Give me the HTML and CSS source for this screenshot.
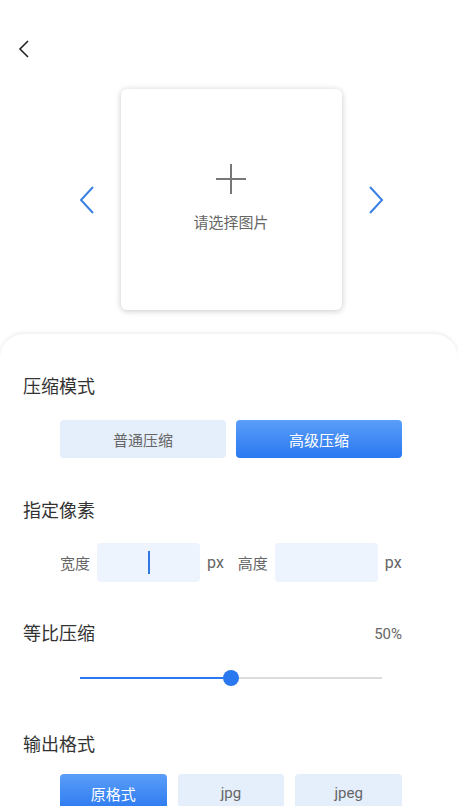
FILE: index.html
```html
<!DOCTYPE html>
<html lang="zh">
<head>
    <meta charset="UTF-8">
    <meta name="viewport" content="width=device-width, initial-scale=1.0">
    <title>图片压缩</title>
    <link rel="stylesheet" href="styles.css">
</head>
<body>

    <!-- Top bar -->
    <header class="topbar">
        <svg class="back" width="14" height="18" viewBox="0 0 14 18">
            <path d="M10 1 L2 9 L10 17" fill="none" stroke="#222" stroke-width="1.6"/>
        </svg>
    </header>

    <!-- Picture picker -->
    <section class="stage">
        <svg class="arrow" width="18" height="28" viewBox="0 0 18 28">
            <path d="M15 1 L3 14 L15 27" fill="none" stroke="#3a7fe4" stroke-width="2"/>
        </svg>
        <div class="card">
            <svg class="plus" width="32" height="32" viewBox="0 0 32 32">
                <path d="M16 1 V31 M1 16 H31" stroke="#777" stroke-width="2"/>
            </svg>
            <p class="card-text">请选择图片</p>
        </div>
        <svg class="arrow" width="18" height="28" viewBox="0 0 18 28">
            <path d="M3 1 L15 14 L3 27" fill="none" stroke="#3a7fe4" stroke-width="2"/>
        </svg>
    </section>

    <!-- Settings panel -->
    <main class="panel">
        <h2 class="title">压缩模式</h2>
        <div class="options two">
            <button class="opt">普通压缩</button>
            <button class="opt active">高级压缩</button>
        </div>

        <h2 class="title">指定像素</h2>
        <div class="size-row">
            <span class="label">宽度</span>
            <div class="input"><span class="cursor"></span></div>
            <span class="unit">px</span>
            <span class="label gap">高度</span>
            <div class="input"></div>
            <span class="unit">px</span>
        </div>

        <div class="title-row">
            <h2 class="title">等比压缩</h2>
            <span class="percent">50%</span>
        </div>
        <div class="slider">
            <div class="track"><div class="fill" style="width: 50%"></div></div>
            <div class="thumb" style="left: 50%"></div>
        </div>

        <h2 class="title">输出格式</h2>
        <div class="options three">
            <button class="opt active">原格式</button>
            <button class="opt">jpg</button>
            <button class="opt">jpeg</button>
        </div>
    </main>

</body>
</html>
```

FILE: styles.css
```css
body {
    margin: 0;
    padding: 0;
    background-color: #fff;
    font-family: Roboto, "Noto Sans CJK SC", sans-serif;
    color: #333;
    overflow: hidden;
}

.topbar {
    height: 89px;
    box-sizing: border-box;
    padding: 40px 0 0 18px;
}

.back {
    display: block;
}

.stage {
    display: flex;
    justify-content: center;
    align-items: center;
    gap: 25px;
    padding-left: 4px;
}

.arrow {
    display: block;
}

.card {
    width: 221px;
    height: 221px;
    border-radius: 6px;
    background-color: #fff;
    box-shadow: 0 1px 6px rgba(0, 0, 0, 0.22);
    display: flex;
    flex-direction: column;
    align-items: center;
    padding-top: 74px;
    box-sizing: border-box;
}

.card-text {
    margin: 17px 0 0;
    font-size: 15px;
    line-height: 22px;
    color: #666;
}

.panel {
    margin-top: 24px;
    border-radius: 24px 24px 0 0;
    box-shadow: 0 -1px 4px rgba(0, 0, 0, 0.09);
    padding: 41px 23px 0;
    min-height: 500px;
}

.title {
    margin: 0;
    font-size: 18px;
    line-height: 24px;
    font-weight: normal;
    color: #333;
}

.options {
    display: flex;
    gap: 10px;
    margin: 21px 33px 41px 37px;
}

.options.three {
    gap: 11px;
    margin-top: 17px;
}

.opt {
    flex: 1;
    height: 38px;
    border: none;
    border-radius: 4px;
    background-color: #e5eefb;
    color: #666;
    font-family: Roboto, "Noto Sans CJK SC", sans-serif;
    font-size: 15px;
    padding: 0;
}

.opt.active {
    background: linear-gradient(to bottom, #5b9ef9, #2a78f0);
    color: #fff;
}

.size-row {
    display: flex;
    align-items: center;
    margin: 20px 0 40px 37px;
    font-size: 15px;
    color: #666;
}

.label {
    margin-right: 7px;
}

.label.gap {
    margin-left: 14px;
}

.input {
    width: 103px;
    height: 39px;
    border-radius: 4px;
    background-color: #edf4fd;
    display: flex;
    align-items: center;
    justify-content: center;
}

.cursor {
    width: 2px;
    height: 23px;
    background-color: #2f78e0;
}

.unit {
    margin-left: 7px;
    font-size: 16px;
    color: #666;
}

.title-row {
    display: flex;
    justify-content: space-between;
    align-items: center;
    margin-right: 33px;
}

.percent {
    font-size: 15px;
    color: #666;
}

.slider {
    position: relative;
    height: 20px;
    margin: 22px 53px 45px 57px;
    display: flex;
    align-items: center;
}

.track {
    width: 100%;
    height: 2px;
    background-color: #dcdcdc;
}

.fill {
    height: 100%;
    background-color: #2a78f0;
}

.thumb {
    position: absolute;
    top: 2px;
    width: 16px;
    height: 16px;
    margin-left: -8px;
    border-radius: 50%;
    background-color: #2a78f0;
}
```
